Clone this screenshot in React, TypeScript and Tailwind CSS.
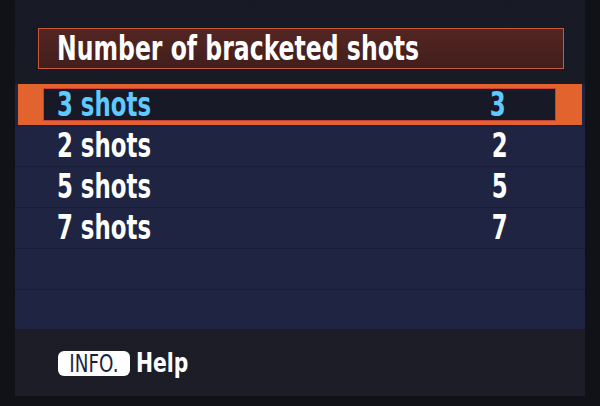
const options = [
  { label: "3 shots", value: "3" },
  { label: "2 shots", value: "2" },
  { label: "5 shots", value: "5" },
  { label: "7 shots", value: "7" },
]

const font = {
  fontFamily: '"DejaVu Sans Condensed", "DejaVu Sans", sans-serif',
}

// the menu font on the LCD is narrower than anything installed, so squeeze it
function Narrow({ children, right }: { children: React.ReactNode; right?: boolean }) {
  return (
    <span className={`inline-block scale-x-[0.77] whitespace-nowrap ${right ? "origin-right" : "origin-left"}`}>
      {children}
    </span>
  )
}

function OptionRow({ label, value, selected }: { label: string; value: string; selected: boolean }) {
  if (selected) {
    return (
      <div className="mx-[3px] h-[41px] bg-[#e2632d] py-[4px] pl-[25px] pr-[26px]">
        <div className="flex h-full items-center justify-between border border-[#c8403a] bg-[#171926] pl-[13px] pr-[49px] text-[#5fcaff]">
          <Narrow>{label}</Narrow>
          <Narrow right>{value}</Narrow>
        </div>
      </div>
    )
  }
  return (
    <div className="flex h-[41px] items-center justify-between border-t border-[#191d36] pl-[42px] pr-[77px] text-white">
      <Narrow>{label}</Narrow>
      <Narrow right>{value}</Narrow>
    </div>
  )
}

export default function App() {
  return (
    <div className="flex h-[406px] w-[600px] bg-[#101217] px-[15px] pb-[10px]" style={font}>
      <div className="flex flex-1 flex-col bg-gradient-to-b from-[#171a24] to-[#1c1d27]">
        <div className="h-[84px] pl-[23px] pr-[21px] pt-[28px]">
          <div className="flex h-[41px] items-center border border-[#c9583c] bg-gradient-to-b from-[#532622] to-[#421e1c] pl-[18px] text-[34px] font-bold text-white">
            <Narrow>Number of bracketed shots</Narrow>
          </div>
        </div>

        <div className="flex flex-col bg-[#1f2443] text-[33px] font-bold">
          {options.map((o, i) => (
            <OptionRow key={o.value} label={o.label} value={o.value} selected={i === 0} />
          ))}
          <div className="h-[41px] border-t border-[#191d36]" />
          <div className="h-[40px] border-t border-[#191d36]" />
        </div>

        <div className="flex items-center gap-[6px] pl-[43px] pt-[15px]">
          <span className="flex h-[25px] w-[72px] items-center justify-center rounded-[6px] bg-white text-[24px] text-[#1b1e42]">
            <span className="inline-block scale-x-[0.85]">INFO.</span>
          </span>
          <span className="text-[26px] font-bold text-white">
            <span className="inline-block origin-left scale-x-[0.87]">Help</span>
          </span>
        </div>
      </div>
    </div>
  )
}
